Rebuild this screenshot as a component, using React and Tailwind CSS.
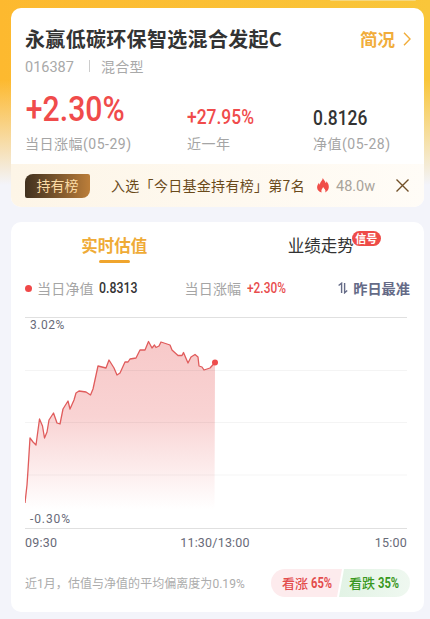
import React from "react";

const LINE =
  "0,186 2,168 3,153 5,121 8,125 11,128 14.5,102 17.5,109 19.5,121 22,115 24,103 28.5,96 32,106 35,107 38,92 43,84 45,92 49,83 51,76 54,74 61,75 65.5,78 68,72 73,49 81,51 84,43 89,51 92,58 95,56 100,45 103,45 105,42 111,41 115,33 120,33 123.5,24.5 127,31 129.5,28 131,30.5 134,29 136,25 145,28 147,33 153,38.5 157,38.5 158.5,35.5 163,46 166,40 170,37.5 173,40 174,49 177,50 179,53 185,51 190,45.5";

function Stat({ className, value, label, valueClass }) {
  return (
    <div className={`flex flex-col ${className}`}>
      <div className="flex h-[41px] items-end">
        <span className={`origin-bottom-left scale-x-[0.85] font-['Roboto'] font-medium whitespace-nowrap ${valueClass}`}>{value}</span>
      </div>
      <span className="mt-[9px] font-['Roboto','Noto_Sans_CJK_SC',sans-serif] text-[14px] leading-[20px] tracking-[0.5px] whitespace-nowrap text-[#a5a5a5]">{label}</span>
    </div>
  );
}

function SummaryCard() {
  return (
    <section className="flex h-[199px] flex-col overflow-hidden rounded-[10px] bg-white">
      <header className="mt-[17px] flex h-[28px] items-center justify-between pr-[13px] pl-[14px]">
        <h1 className="text-[20px] leading-[28px] font-bold tracking-[0.32px] whitespace-nowrap text-[#333]">永赢低碳环保智选混合发起C</h1>
        <div className="flex items-center gap-[8px] text-[#f1ad3b]">
          <span className="text-[17.5px] leading-[28px] font-bold">简况</span>
          <svg width="8" height="14" viewBox="0 0 8 14" fill="none" stroke="currentColor" strokeWidth="1.4"><path d="M1 .8 7 7 1 13.2" /></svg>
        </div>
      </header>
      <div className="mt-[3px] flex h-[20px] items-center pl-[14px] text-[14px] leading-[20px] text-[#a9a9a9]">
        <span className="w-[64px] pt-[3px] font-['Roboto'] text-[14.5px]">016387</span>
        <span className="mr-[11px] h-[12px] w-px bg-[#ccc]" />
        <span className="tracking-[0.2px]">混合型</span>
      </div>
      <div className="flex h-[88px] shrink-0 pt-[8px] pl-[14px]">
        <Stat className="w-[162px]" value="+2.30%" label="当日涨幅(05-29)" valueClass="pl-px text-[35.5px] leading-[31px] text-[#f04b4b]" />
        <Stat className="w-[126px]" value="+27.95%" label="近一年" valueClass="text-[20.5px] leading-[15px] text-[#f04b4b]" />
        <Stat className="w-[90px]" value="0.8126" label="净值(05-28)" valueClass="text-[20.5px] leading-[13px] text-[#333]" />
      </div>
      <div className="flex min-h-0 flex-1 items-center bg-linear-to-r from-[#fdf5e7] to-[#fffcf7] pr-[15px] pl-[14px]">
        <span className="flex h-[24px] w-[65px] items-center justify-center rounded-tl-[8px] rounded-tr-[2px] rounded-br-[8px] rounded-bl-[2px] bg-linear-to-r from-[#41311f] to-[#bc7e39] text-[14px] text-[#fbdba5]">持有榜</span>
        <span className="ml-[21px] w-[206px] text-[14px] tracking-[0.3px] whitespace-nowrap text-[#6a4a1b]">入选「今日基金持有榜」第7名</span>
        <svg width="12" height="15" viewBox="0 0 13 16"><path d="M6.2 0C7.6 2.2 9 3.7 9.4 5.5 10 5 10.3 4.2 10.2 3.5 12 5.5 13 7.6 12.8 10c-.2 2.8-1.8 4.7-4 5.5.8-1.7.3-3.1-1.3-4.6-.4-.4-.7-.8-.8-1.2-.9 1.7-2.7 3.3-1.7 5.8C1.8 14.8.2 12.7.1 10.2 0 8.2 1 6.7 2.1 5c.2 1 .5 1.7 1.2 2.1C3 4.3 6.2 3 6.2 0Z" fill="#f04d48" /></svg>
        <span className="ml-[7px] pt-[2px] font-['Roboto'] text-[14.5px] text-[#a9a39b]">48.0w</span>
        <svg className="ml-auto" width="13" height="13" viewBox="0 0 13 13" stroke="#715029" strokeWidth="1.4"><path d="m.5.5 12 12m0-12-12 12" /></svg>
      </div>
    </section>
  );
}

function EstimateChart() {
  return (
    <div className="relative mx-[14px] flex h-[212px] flex-col justify-between pt-[1px] pb-[3px] pl-[5px] font-['Roboto'] text-[12px] leading-[14px] tracking-[0.5px] text-[#686a78]">
      <svg className="absolute inset-0" width="386" height="212" viewBox="0 0 386 212" fill="none">
        <defs>
          <linearGradient id="area" x1="0" y1="24" x2="0" y2="192" gradientUnits="userSpaceOnUse">
            <stop stopColor="#f7c9c9" />
            <stop offset=".45" stopColor="#f9d3d3" />
            <stop offset="1" stopColor="#fff" />
          </linearGradient>
        </defs>
        <polygon points={`${LINE} 189.5,192 0,192`} fill="url(#area)" />
        <path d="M0 53.5H382M0 105.5H382M0 158H382" stroke="#000" strokeOpacity=".045" />
        <path d="M0 .5H382M0 211.5H382" stroke="#e0e0e0" strokeWidth="1.2" />
        <polyline points={LINE} stroke="#e05c5c" strokeWidth="1.3" strokeLinejoin="round" />
        <circle cx="190" cy="45.5" r="3" fill="#ee4c4c" />
      </svg>
      <span className="relative">3.02%</span>
      <span className="relative tracking-[0.9px]">-0.30%</span>
    </div>
  );
}

function EstimateCard() {
  return (
    <section className="mt-[15px] flex h-[390px] flex-col rounded-[10px] bg-white">
      <nav className="flex h-[41px] pt-[9px]">
        <div className="flex w-1/2 flex-col items-center">
          <span className="text-[16.5px] leading-[28px] font-bold text-[#efab37]">实时估值</span>
          <span className="mt-px h-[2.5px] w-[31px] shrink-0 rounded-full bg-[#f0a52d]" />
        </div>
        <div className="flex w-1/2 justify-center">
          <span className="relative text-[16.5px] leading-[28px] text-[#333]">
            业绩走势
            <span className="absolute top-0 left-[64px] flex h-[15px] w-[29px] items-center justify-center rounded-full bg-[#ee4c48] text-[11px] leading-none font-bold whitespace-nowrap text-white">信号</span>
          </span>
        </div>
      </nav>
      <div className="mt-[14px] flex h-[22px] items-center pr-[14px] pl-[14px] text-[14px] leading-[22px] whitespace-nowrap text-[#a5a5a5]">
        <span className="mr-[5px] size-[7px] rounded-full bg-[#f04848]" />
        <span className="w-[61.5px] tracking-[0.2px]">当日净值</span>
        <span className="w-[86px] origin-left scale-x-[0.88] font-['Roboto'] font-medium text-[#333]">0.8313</span>
        <span className="w-[62px] tracking-[0.2px]">当日涨幅</span>
        <span className="w-[60px] origin-left scale-x-[0.85] font-['Roboto'] font-medium text-[#e84c4c]">+2.30%</span>
        <span className="ml-auto flex items-center gap-[5px] font-bold text-[#656b87]">
          <svg width="10" height="12" viewBox="0 0 10 12" fill="none" stroke="currentColor" strokeWidth="1.4"><path d="M.6 3.5 3.6 1.2V11M6.6 1v9.8l2.6-2.3" /></svg>
          <span className="text-[14.2px]">昨日最准</span>
        </span>
      </div>
      <div className="h-[18px]" />
      <EstimateChart />
      <div className="mt-[6px] flex h-[16px] justify-between pr-[17px] pl-[14px] font-['Roboto'] text-[12.5px] leading-[16px] tracking-[0.2px] text-[#686a78]">
        <span>09:30</span>
        <span className="pr-[2px]">11:30/13:00</span>
        <span>15:00</span>
      </div>
      <footer className="mt-[18px] flex h-[28px] items-center justify-between pr-[14px] pl-[14px]">
        <span className="pt-px font-['Roboto','Noto_Sans_CJK_SC',sans-serif] text-[12px] tracking-[0.04px] whitespace-nowrap text-[#acacac]">近1月，估值与净值的平均偏离度为0.19%</span>
        <div className="flex h-[28px] w-[139px] shrink-0 overflow-hidden rounded-full text-[13px] font-medium whitespace-nowrap">
          <span className="flex w-[71px] items-center gap-[3px] bg-[#fdebed] pl-[11px] text-[#e34d4d] [clip-path:polygon(0_0,100%_0,calc(100%_-_5px)_100%,0_100%)]">
            看涨<b className="origin-left scale-x-[0.8] font-['Roboto'] text-[14px]">65%</b>
          </span>
          <span className="ml-[-3px] flex w-[71px] items-center gap-[3px] bg-linear-to-r from-[#e2f3e5] to-[#eff8f0] pl-[10px] text-[#399821] [clip-path:polygon(5px_0,100%_0,100%_100%,0_100%)]">
            看跌<b className="origin-left scale-x-[0.8] font-['Roboto'] text-[14px]">35%</b>
          </span>
        </div>
      </footer>
    </section>
  );
}

export default function App() {
  return (
    <main className="h-[619px] w-[430px] overflow-hidden bg-[#f3f4fa] font-['Noto_Sans_CJK_SC',sans-serif]">
      <div className="h-full bg-[linear-gradient(180deg,#f3f4fa00_0px,#f3f4fa00_80px,#f3f4fa_185px),linear-gradient(90deg,#fdb92f,#f9c63a)]">
        <div className="flex h-[8px] justify-end pr-[14px]">
          <span className="h-px w-[86px] rounded-b-full bg-[#f5d77d]" />
        </div>
        <div className="pr-[6px] pl-[11px]">
          <SummaryCard />
          <EstimateCard />
        </div>
      </div>
    </main>
  );
}
